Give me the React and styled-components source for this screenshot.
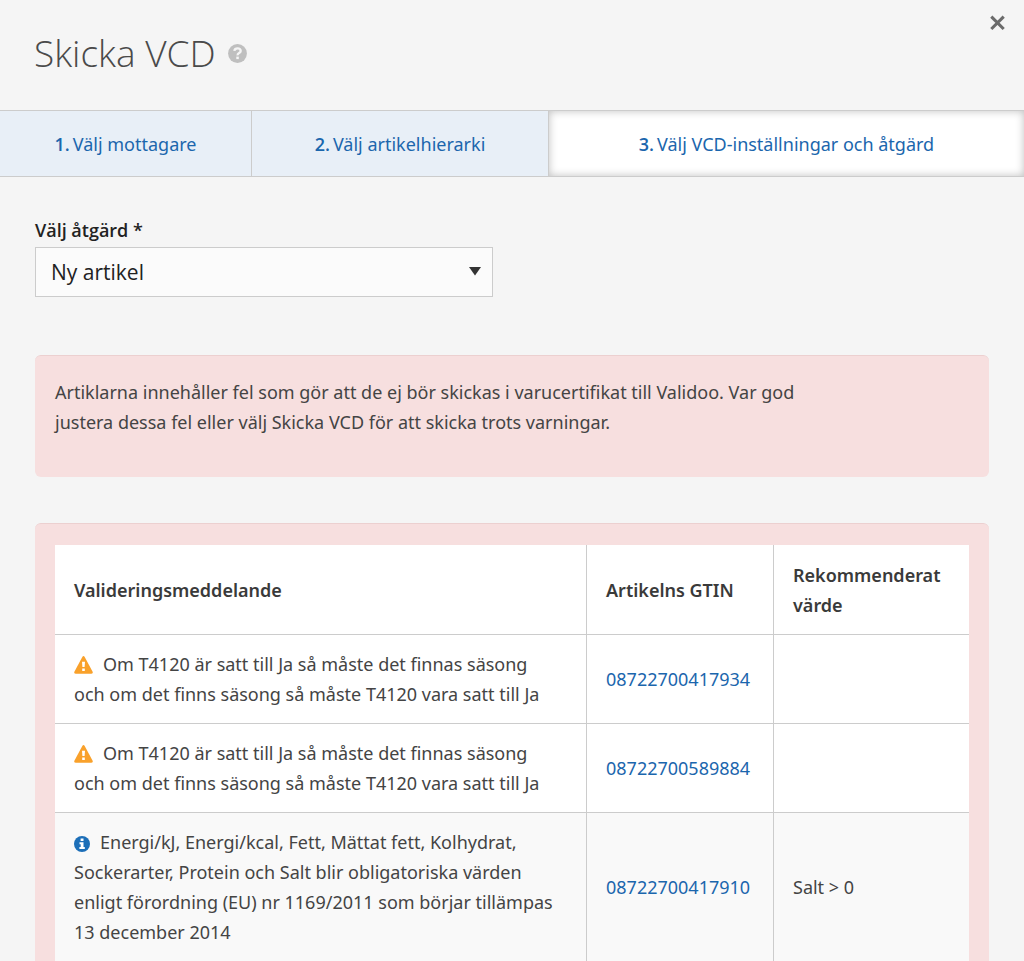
import React from "react";
import styled, { createGlobalStyle } from "styled-components";

const BODY_FONT = `"Noto Sans", "Open Sans", sans-serif`;
const HEAD_FONT = `"Open Sans", "Noto Sans", sans-serif`;

const GlobalStyle = createGlobalStyle`
  *, *::before, *::after { box-sizing: border-box; }
  body {
    margin: 0;
    background: #f5f5f5;
    color: #444;
    font-family: ${BODY_FONT};
    font-size: 18px;
    line-height: 30px;
  }
`;

const Dialog = styled.main`
  display: flex;
  flex-direction: column;
  min-height: 100vh;
`;

const Header = styled.header`
  display: flex;
  align-items: flex-start;
  justify-content: space-between;
  height: 110px;
  padding: 14px 18px 0 34px;
`;

const TitleGroup = styled.div`
  display: flex;
  align-items: center;
  gap: 12px;
  padding-top: 14px;
`;

const Title = styled.h1`
  margin: 0;
  font-family: ${HEAD_FONT};
  font-size: 37px;
  line-height: 50px;
  font-weight: 300;
  color: #4a4a4a;
`;

const IconButton = styled.button`
  display: flex;
  margin: 0;
  padding: 0;
  border: 0;
  background: none;
  cursor: pointer;
`;

const Tabs = styled.nav`
  display: grid;
  grid-template-columns: 252fr 297fr 475fr;
  height: 67px;
  border-top: 1px solid #ccc;
  border-bottom: 1px solid #ccc;
`;

const Tab = styled.a`
  display: flex;
  align-items: center;
  justify-content: center;
  gap: 3px;
  border-right: ${(p) => (p.$active ? "0" : "1px solid #ccc")};
  background: ${(p) => (p.$active ? "#fff" : "#e8eff7")};
  box-shadow: ${(p) => (p.$active ? "inset 0 0 9px rgba(0, 0, 0, 0.25)" : "none")};
  color: #1b66ad;
  text-decoration: none;

  b { font-family: ${HEAD_FONT}; font-weight: 600; }
`;

const Content = styled.div`
  display: flex;
  flex-direction: column;
  padding: 38px 35px 0;
`;

const Label = styled.label`
  color: #222;
  font-family: ${HEAD_FONT};
  font-weight: 600;
  line-height: 30px;
`;

const SelectWrap = styled.div`
  position: relative;
  width: 48%;
  margin-top: 2px;
`;

const Select = styled.select`
  appearance: none;
  display: block;
  width: 100%;
  height: 50px;
  padding: 0 15px;
  border: 1px solid #ccc;
  border-radius: 0;
  background: #fbfbfb;
  color: #222;
  font: 400 21px ${HEAD_FONT};
`;

const Caret = styled.svg`
  position: absolute;
  top: 20px;
  right: 12px;
  pointer-events: none;
`;

const Panel = styled.section`
  border-top: 1px solid #ecd0d0;
  border-radius: 6px;
  background: #f7dfdf;
`;

const Alert = styled(Panel)`
  min-height: 122px;
  margin-top: 58px;
  padding: 21px 20px;

  p { max-width: 780px; margin: 0; }
`;

const Results = styled(Panel)`
  margin-top: 46px;
  padding: 21px 20px 0;
  border-bottom-left-radius: 0;
  border-bottom-right-radius: 0;
`;

const Table = styled.table`
  width: 100%;
  table-layout: fixed;
  border-collapse: separate;
  border-spacing: 0;
  background: #fff;
`;

const Column = styled.col`
  width: ${(p) => p.$width};
`;

const HeadCell = styled.th`
  height: 90px;
  padding: 14px 19px;
  border-bottom: 1px solid #ccc;
  text-align: left;
  font-family: ${BODY_FONT};
  font-weight: 600;
  color: #3a3a3a;

  & + & { border-left: 1px solid #ccc; }
`;

const Row = styled.tr`
  background: ${(p) => (p.$shaded ? "#f9f9f9" : "#fff")};
`;

const Cell = styled.td`
  padding: 14px 19px;
  border-bottom: 1px solid #ccc;

  &:first-child { padding-right: 28px; }
  & + & { border-left: 1px solid #ccc; }
`;

const ArticleLink = styled.a`
  color: #1b66ad;
  text-decoration: none;
`;

const StatusIcon = styled.svg`
  margin-right: 10px;
  vertical-align: -3px;
`;

const WarningIcon = () => (
  <StatusIcon width="19" height="18" viewBox="0 0 19 18" role="img" aria-label="Varning">
    <path d="M8.3 1Q9.5-.8 10.7 1L18.5 15.4Q19.3 17.6 17.2 17.8H1.8Q-.3 17.6 .5 15.4Z" fill="#f9a12b" />
    <path d="M8 5.8h3l-.4 5.3H8.4ZM8.2 12.6h2.6v2.5H8.2Z" fill="#fff" />
  </StatusIcon>
);

const InfoIcon = () => (
  <StatusIcon width="16" height="16" viewBox="0 0 16 16" role="img" aria-label="Information">
    <circle cx="8" cy="8" r="8" fill="#1d6fb8" />
    <path d="M6.6 2.6h2.9v2.3H6.6ZM5.5 6.3h4v4.8h1.3v1.9H5.4v-1.9h1.3V8.2H5.5Z" fill="#fff" />
  </StatusIcon>
);

const ICONS = { warning: WarningIcon, info: InfoIcon };

const SEASON = "Om T4120 är satt till Ja så måste det finnas säsong och om det finns säsong så måste T4120 vara satt till Ja";

const MESSAGES = [
  { type: "warning", text: SEASON, gtin: "08722700417934", value: "" },
  { type: "warning", text: SEASON, gtin: "08722700589884", value: "" },
  {
    type: "info",
    text: "Energi/kJ, Energi/kcal, Fett, Mättat fett, Kolhydrat, Sockerarter, Protein och Salt blir obligatoriska värden enligt förordning (EU) nr 1169/2011 som börjar tillämpas 13 december 2014",
    gtin: "08722700417910",
    value: "Salt > 0",
  },
];

const STEPS = ["Välj mottagare", "Välj artikelhierarki", "Välj VCD-inställningar och åtgärd"];

export default function App() {
  return (
    <Dialog>
      <GlobalStyle />
      <Header>
        <TitleGroup>
          <Title>Skicka VCD</Title>
          <IconButton type="button" aria-label="Hjälp">
            <svg width="19" height="19" viewBox="0 0 19 19" aria-hidden="true">
              <circle cx="9.5" cy="9.5" r="9.4" fill="#bfbfbf" />
              <path d="M6.3 6.9Q6.7 4.4 9.6 4.4T12.7 6.9Q12.7 8.2 11.1 9.1T9.6 11.4" fill="none" stroke="#f5f5f5" strokeWidth="2.3" />
              <path d="M8.3 12.6h2.5v2.5H8.3Z" fill="#f5f5f5" />
            </svg>
          </IconButton>
        </TitleGroup>
        <IconButton type="button" aria-label="Stäng">
          <svg width="17" height="17" viewBox="0 0 17 17" aria-hidden="true">
            <path d="M2.3 2.6 14.7 15M14.7 2.6 2.3 15" stroke="#6b6b6b" strokeWidth="3.1" />
          </svg>
        </IconButton>
      </Header>
      <Tabs>
        {STEPS.map((step, i) => (
          <Tab key={step} href={`#steg-${i + 1}`} $active={i === 2} aria-current={i === 2 ? "step" : undefined}>
            <b>{i + 1}.</b>
            <span>{step}</span>
          </Tab>
        ))}
      </Tabs>
      <Content>
        <Label htmlFor="action">Välj åtgärd *</Label>
        <SelectWrap>
          <Select id="action" defaultValue="new">
            <option value="new">Ny artikel</option>
          </Select>
          <Caret width="12" height="9" viewBox="0 0 12 9" aria-hidden="true">
            <path d="M0 0H12L6 8.5Z" fill="#333" />
          </Caret>
        </SelectWrap>
        <Alert role="alert">
          <p>
            Artiklarna innehåller fel som gör att de ej bör skickas i varucertifikat till Validoo. Var god justera
            dessa fel eller välj Skicka VCD för att skicka trots varningar.
          </p>
        </Alert>
        <Results>
          <Table>
            <colgroup>
              <Column $width="auto" />
              <Column $width="187px" />
              <Column $width="196px" />
            </colgroup>
            <thead>
              <tr>
                <HeadCell scope="col">Valideringsmeddelande</HeadCell>
                <HeadCell scope="col">Artikelns GTIN</HeadCell>
                <HeadCell scope="col">Rekommenderat värde</HeadCell>
              </tr>
            </thead>
            <tbody>
              {MESSAGES.map((m) => {
                const Icon = ICONS[m.type];
                return (
                  <Row key={m.gtin} $shaded={m.type === "info"}>
                    <Cell>
                      <Icon />
                      {m.text}
                    </Cell>
                    <Cell>
                      <ArticleLink href={`#${m.gtin}`}>{m.gtin}</ArticleLink>
                    </Cell>
                    <Cell>{m.value}</Cell>
                  </Row>
                );
              })}
            </tbody>
          </Table>
        </Results>
      </Content>
    </Dialog>
  );
}
